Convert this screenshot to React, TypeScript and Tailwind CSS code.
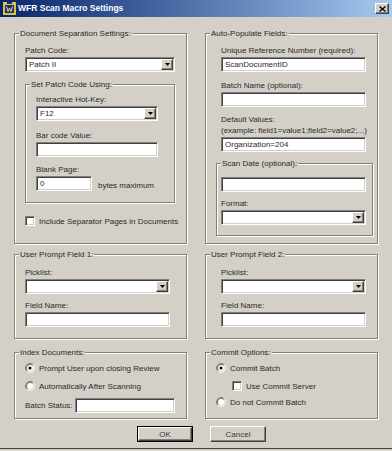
import React from "react";

const sunken =
  "bg-white border border-t-[#808080] border-l-[#808080] border-b-white border-r-white shadow-[inset_1px_1px_0_#404040,inset_-1px_-1px_0_#d4d0c8]";
const raised =
  "bg-[#d4d0c8] border border-t-white border-l-white border-b-[#404040] border-r-[#404040] shadow-[inset_-1px_-1px_0_#808080]";

function Group({
  title,
  className,
  body,
  children,
}: {
  title: string;
  className: string;
  body: string;
  children: React.ReactNode;
}) {
  return (
    <div className={`flex flex-col border border-[#808080] shadow-[1px_1px_0_#fff,inset_1px_1px_0_#fff] ${className}`}>
      <div className="-mt-[6px] ml-[4px] w-fit bg-[#d4d0c8] px-[1px] leading-[11px] whitespace-nowrap">{title}</div>
      <div className={`flex flex-col ${body}`}>{children}</div>
    </div>
  );
}

function Label({ text, className = "" }: { text: string; className?: string }) {
  return <div className={`leading-[11px] whitespace-nowrap ${className}`}>{text}</div>;
}

function Field({ w, value = "", className = "" }: { w: string; value?: string; className?: string }) {
  return (
    <div className={`h-[15px] pl-[3px] leading-[13px] whitespace-nowrap overflow-hidden ${sunken} ${w} ${className}`}>
      {value}
    </div>
  );
}

function Select({ w, value = "", className = "" }: { w: string; value?: string; className?: string }) {
  return (
    <div className={`flex h-[15px] p-[1px] ${sunken} ${w} ${className}`}>
      <div className="flex-1 pl-[2px] leading-[11px] whitespace-nowrap overflow-hidden">{value}</div>
      <div className={`flex w-[12px] items-center justify-center ${raised}`}>
        <svg width="5" height="3" viewBox="0 0 5 3">
          <polygon points="0,0 5,0 2.5,3" fill="#000" />
        </svg>
      </div>
    </div>
  );
}

function Check({ label, className = "" }: { label: string; className?: string }) {
  return (
    <div className={`flex h-[12px] items-center gap-[4px] ${className}`}>
      <div className={`h-[10px] w-[10px] ${sunken}`} />
      <span className="leading-[11px] whitespace-nowrap">{label}</span>
    </div>
  );
}

function Radio({ label, checked = false, className = "" }: { label: string; checked?: boolean; className?: string }) {
  return (
    <div className={`flex h-[12px] items-center gap-[4px] ${className}`}>
      <svg width="10" height="10" viewBox="0 0 12 12">
        <circle cx="6" cy="6" r="4.5" fill="#fff" />
        <path d="M2.11 9.89 A5.5 5.5 0 0 1 9.89 2.11" stroke="#808080" fill="none" />
        <path d="M9.89 2.11 A5.5 5.5 0 0 1 2.11 9.89" stroke="#fff" fill="none" />
        <path d="M2.82 9.18 A4.5 4.5 0 0 1 9.18 2.82" stroke="#404040" fill="none" />
        <path d="M9.18 2.82 A4.5 4.5 0 0 1 2.82 9.18" stroke="#d4d0c8" fill="none" />
        {checked && <circle cx="6" cy="6" r="1.8" fill="#000" />}
      </svg>
      <span className="leading-[11px] whitespace-nowrap">{label}</span>
    </div>
  );
}

export default function App() {
  return (
    <div className="flex h-[451px] w-[392px] flex-col bg-[#d4d0c8] font-['Liberation_Sans',Arial,sans-serif] text-[8px] text-[#2a2a2a]">
      {/* Title bar */}
      <div className="flex h-[17px] items-center bg-gradient-to-r from-[#0a246a] to-[#a6caf0] pl-[3px] pr-[3px]">
        <svg width="13" height="13" viewBox="0 0 13 13">
          <rect x="0" y="0" width="13" height="13" fill="#d8c838" />
          <rect x="2" y="3" width="9" height="8" fill="#1c2c8c" />
          <rect x="4" y="0" width="5" height="2" fill="#1c2c8c" />
          <path d="M3.5 4.5 L5 9.5 L6.5 6 L8 9.5 L9.5 4.5" stroke="#e8e060" strokeWidth="1" fill="none" />
        </svg>
        <span className="ml-[2px] text-[8.5px] font-bold leading-[11px] text-white">WFR Scan Macro Settings</span>
        <div className={`ml-auto flex h-[11px] w-[14px] items-center justify-center ${raised}`}>
          <svg width="7" height="6" viewBox="0 0 7 6">
            <path d="M0.5 0.5 L6.5 5.5 M6.5 0.5 L0.5 5.5" stroke="#000" strokeWidth="1.3" />
          </svg>
        </div>
      </div>

      <div className="flex flex-col px-[14px]">
        {/* Row 1 */}
        <div className="mt-[16px] flex gap-[18px]">
          <Group title="Document Separation Settings:" className="h-[211px] w-[173px]" body="pl-[10px]">
            <Label text="Patch Code:" className="mt-[6px]" />
            <Select w="w-[150px]" value="Patch II" className="mt-[1px]" />
            <Group title="Set Patch Code Using:" className="mt-[12px] h-[119px] w-[150px]" body="pl-[10px]">
              <Label text="Interactive Hot-Key:" className="mt-[4px]" />
              <Select w="w-[122px]" value="F12" className="mt-[1px]" />
              <Label text="Bar code Value:" className="mt-[9px]" />
              <Field w="w-[122px]" className="mt-[1px]" />
              <Label text="Blank Page:" className="mt-[7px]" />
              <div className="mt-[1px] flex items-end gap-[6px]">
                <Field w="w-[56px]" value="0" />
                <span className="leading-[11px]">bytes maximum</span>
              </div>
            </Group>
            <Check label="Include Separator Pages in Documents" className="mt-[12px]" />
          </Group>

          <Group title="Auto-Populate Fields:" className="h-[211px] w-[173px]" body="pl-[10px]">
            <div className="flex flex-col pl-[5px]">
              <Label text="Unique Reference Number (required):" className="mt-[6px]" />
              <Field w="w-[145px]" value="ScanDocumentID" className="mt-[1px]" />
              <Label text="Batch Name (optional):" className="mt-[8px]" />
              <Field w="w-[145px]" className="mt-[1px]" />
              <Label text="Default Values:" className="mt-[7px]" />
              <Label text="(example: field1=value1;field2=value2;...)" />
              <Field w="w-[145px]" value="Organization=204" className="mt-[1px]" />
            </div>
            <Group title="Scan Date (optional):" className="mt-[11px] h-[73px] w-[157px]" body="pl-[4px]">
              <Field w="w-[145px]" className="mt-[8px]" />
              <Label text="Format:" className="mt-[6px]" />
              <Select w="w-[145px]" className="mt-[1px]" />
            </Group>
          </Group>
        </div>

        {/* Row 2 */}
        <div className="mt-[10px] flex gap-[18px]">
          <Group title="User Prompt Field 1:" className="h-[85px] w-[173px]" body="pl-[10px]">
            <Label text="Picklist:" className="mt-[7px]" />
            <Select w="w-[145px]" className="mt-[1px]" />
            <Label text="Field Name:" className="mt-[6px]" />
            <Field w="w-[145px]" className="mt-[1px]" />
          </Group>
          <Group title="User Prompt Field 2:" className="h-[85px] w-[173px]" body="pl-[15px]">
            <Label text="Picklist:" className="mt-[7px]" />
            <Select w="w-[145px]" className="mt-[1px]" />
            <Label text="Field Name:" className="mt-[6px]" />
            <Field w="w-[145px]" className="mt-[1px]" />
          </Group>
        </div>

        {/* Row 3 */}
        <div className="mt-[13px] flex gap-[18px]">
          <Group title="Index Documents:" className="h-[67px] w-[173px]" body="pl-[10px]">
            <Radio label="Prompt User upon closing Review" checked className="mt-[4px]" />
            <Radio label="Automatically After Scanning" className="mt-[6px]" />
            <div className="mt-[6px] flex items-center">
              <span className="w-[50px] leading-[11px] whitespace-nowrap">Batch Status:</span>
              <Field w="w-[100px]" />
            </div>
          </Group>
          <Group title="Commit Options:" className="h-[67px] w-[173px]" body="pl-[10px]">
            <Radio label="Commit Batch" checked className="mt-[4px]" />
            <Check label="Use Commit Server" className="mt-[6px] ml-[16px]" />
            <Radio label="Do not Commit Batch" className="mt-[4px]" />
          </Group>
        </div>

        {/* Buttons */}
        <div className="mt-[7px] flex gap-[17px] pl-[123px]">
          <div className="h-[16px] w-[56px] border border-black">
            <div className={`flex h-full w-full items-center justify-center leading-[11px] text-[#3a3a3a] ${raised}`}>OK</div>
          </div>
          <div className={`flex h-[16px] w-[56px] items-center justify-center leading-[11px] text-[#3a3a3a] ${raised}`}>Cancel</div>
        </div>
      </div>

      <div className="mt-auto mb-[2px] h-px bg-[#404040]" />
    </div>
  );
}
